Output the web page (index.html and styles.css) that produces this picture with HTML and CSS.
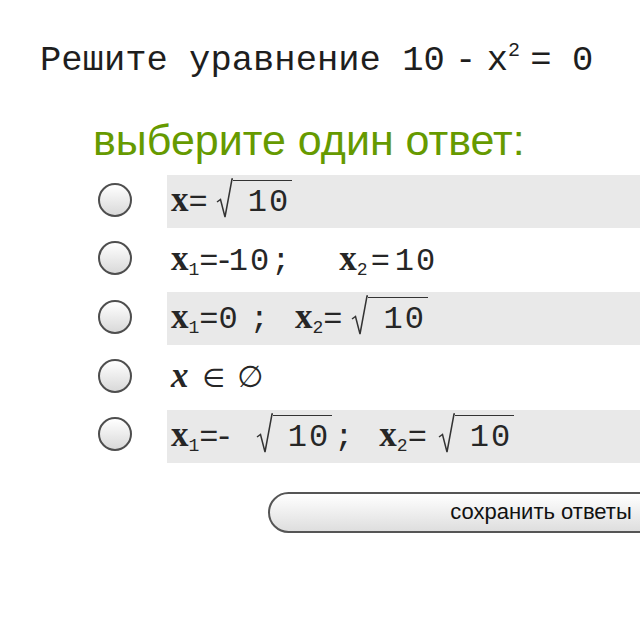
FILE: index.html
```html
<!DOCTYPE html>
<html lang="ru">
<head>
<meta charset="utf-8">
<title>Тест</title>
<link rel="stylesheet" href="styles.css">
</head>
<body>
<main class="quiz">
  <h1 class="question">Решите уравнение <span class="expr">10 - x<sup>2</sup> = <span class="zero">0</span></span></h1>
  <p class="prompt">выберите один ответ:</p>
  <ul class="options">
    <li class="option shaded">
      <span class="radio"></span>
      <span class="answer"><span class="math"><b class="x">x</b><span class="eq">=</span><span class="root r1"><svg class="rad" viewBox="0 0 17 41" width="17" height="41" aria-hidden="true"><path d="M1 24 L4.5 21.5 L9 39 L16 1 L17 1"/></svg><span class="under">10</span></span></span></span>
    </li>
    <li class="option">
      <span class="radio"></span>
      <span class="answer"><span class="math"><b class="x">x</b><sub>1</sub><span class="eq tight">=</span><span class="mn">-</span>10<span class="semi">;</span><span class="gap wide"></span><b class="x">x</b><sub>2</sub><span class="eq open">=</span>10</span></span>
    </li>
    <li class="option shaded">
      <span class="radio"></span>
      <span class="answer"><span class="math"><b class="x">x</b><sub>1</sub><span class="eq">=</span>0<span class="semi loose">;</span><span class="gap narrow"></span><b class="x">x</b><sub>2</sub><span class="eq">=</span><span class="root r3"><svg class="rad" viewBox="0 0 17 41" width="17" height="41" aria-hidden="true"><path d="M1 24 L4.5 21.5 L9 39 L16 1 L17 1"/></svg><span class="under">10</span></span></span></span>
    </li>
    <li class="option">
      <span class="radio"></span>
      <span class="answer"><span class="math"><b class="x it">x</b><span class="sym in">∈</span><span class="sym empty">∅</span></span></span>
    </li>
    <li class="option shaded">
      <span class="radio"></span>
      <span class="answer"><span class="math"><b class="x">x</b><sub>1</sub><span class="eq tight">=</span><span class="mn-root">-</span><span class="root r5a"><svg class="rad" viewBox="0 0 17 41" width="17" height="41" aria-hidden="true"><path d="M1 24 L4.5 21.5 L9 39 L16 1 L17 1"/></svg><span class="under">10</span></span><span class="semi tight">;</span><span class="gap narrow"></span><b class="x">x</b><sub>2</sub><span class="eq">=</span><span class="root r5b"><svg class="rad" viewBox="0 0 17 41" width="17" height="41" aria-hidden="true"><path d="M1 24 L4.5 21.5 L9 39 L16 1 L17 1"/></svg><span class="under">10</span></span></span></span>
    </li>
  </ul>
  <div class="actions">
    <button class="save" type="button">сохранить ответы</button>
  </div>
</main>
</body>
</html>
```

FILE: styles.css
```css
html, body {
  margin: 0;
  padding: 0;
  background: #ffffff;
}

body {
  font-family: "Liberation Sans", Arial, sans-serif;
  width: 640px;
  height: 640px;
  overflow: hidden;
}

.quiz {
  display: flex;
  flex-direction: column;
}

/* question line */
.question {
  margin: 0;
  padding: 41px 0 0 40px;
  font-family: "Liberation Mono", "Courier New", monospace;
  font-size: 35.5px;
  font-weight: normal;
  line-height: 40px;
  color: #1e1e1e;
  white-space: nowrap;
}

.expr {
  word-spacing: -11px;
}

.question sup {
  font-size: 20px;
  vertical-align: 14px;
  line-height: 0;
}

.zero {
  margin-left: 10px;
}

/* prompt */
.prompt {
  margin: 0;
  padding: 34px 0 0 93px;
  font-size: 43px;
  line-height: 50px;
  color: #669a00;
}

/* options */
.options {
  list-style: none;
  margin: 10px 0 0;
  padding: 0 0 0 98px;
  display: flex;
  flex-direction: column;
  gap: 5.7px;
}

.option {
  display: flex;
  align-items: center;
  gap: 35px;
  height: 53px;
}

.radio {
  flex: none;
  box-sizing: border-box;
  width: 34px;
  height: 34px;
  border-radius: 50%;
  border: 2px solid #4e4e4e;
  background: linear-gradient(#ffffff, #d9d9d9);
  margin-top: -4px;
}

.answer {
  flex: 1;
  align-self: stretch;
  box-sizing: border-box;
  padding: 5px 0 0 4px;
  font-family: "Liberation Mono", "Courier New", monospace;
  font-size: 32px;
  line-height: 40px;
  color: #262626;
  white-space: nowrap;
}

.shaded .answer {
  background: #e9e9e9;
}

.math {
  letter-spacing: 2px;
}

.x {
  font-family: "Liberation Serif", "Times New Roman", serif;
  font-size: 35px;
  font-weight: bold;
  letter-spacing: 0;
}

.it {
  font-style: italic;
}

.math sub {
  font-size: 18px;
  letter-spacing: 0;
  vertical-align: -5px;
  line-height: 0;
}

.eq {
  letter-spacing: 0;
}

.eq.tight {
  letter-spacing: -4px;
}

.eq.open {
  letter-spacing: 2px;
  margin: 0 3px 0 3px;
}

.mn {
  letter-spacing: -5px;
}

.semi.loose {
  margin-left: 10px;
}

.semi.tight {
  margin-left: 2px;
}

.gap {
  display: inline-block;
}

.gap.wide {
  width: 47px;
}

.gap.narrow {
  width: 24px;
}

.root {
  white-space: nowrap;
}

.r1 {
  margin-left: 8px;
}

.r3 {
  margin-left: 9px;
}

.r5a {
  margin-left: 20px;
}

.r5b {
  margin-left: 11px;
}

.rad {
  display: inline-block;
  vertical-align: -8px;
  margin-top: -10px;
  fill: none;
  stroke: #333333;
  stroke-width: 1.5;
  stroke-linejoin: miter;
}

.under {
  display: inline-block;
  border-top: 1.5px solid #333333;
  padding: 6px 2px 0 15px;
  margin-top: -10px;
  line-height: 32px;
}

.sym {
  font-family: "DejaVu Sans", sans-serif;
  font-size: 26px;
  letter-spacing: 0;
}

.in {
  margin: 0 12px 0 14px;
}

.empty {
  font-size: 30px;
}

/* button */
.actions {
  padding: 29px 0 0 268px;
}

.save {
  box-sizing: border-box;
  width: 546px;
  height: 41px;
  border: 2px solid #555555;
  border-radius: 21px;
  background: linear-gradient(#ffffff, #dedede);
  font-family: "Liberation Sans", Arial, sans-serif;
  font-size: 22px;
  color: #111111;
  padding: 0;
  cursor: pointer;
}
```
